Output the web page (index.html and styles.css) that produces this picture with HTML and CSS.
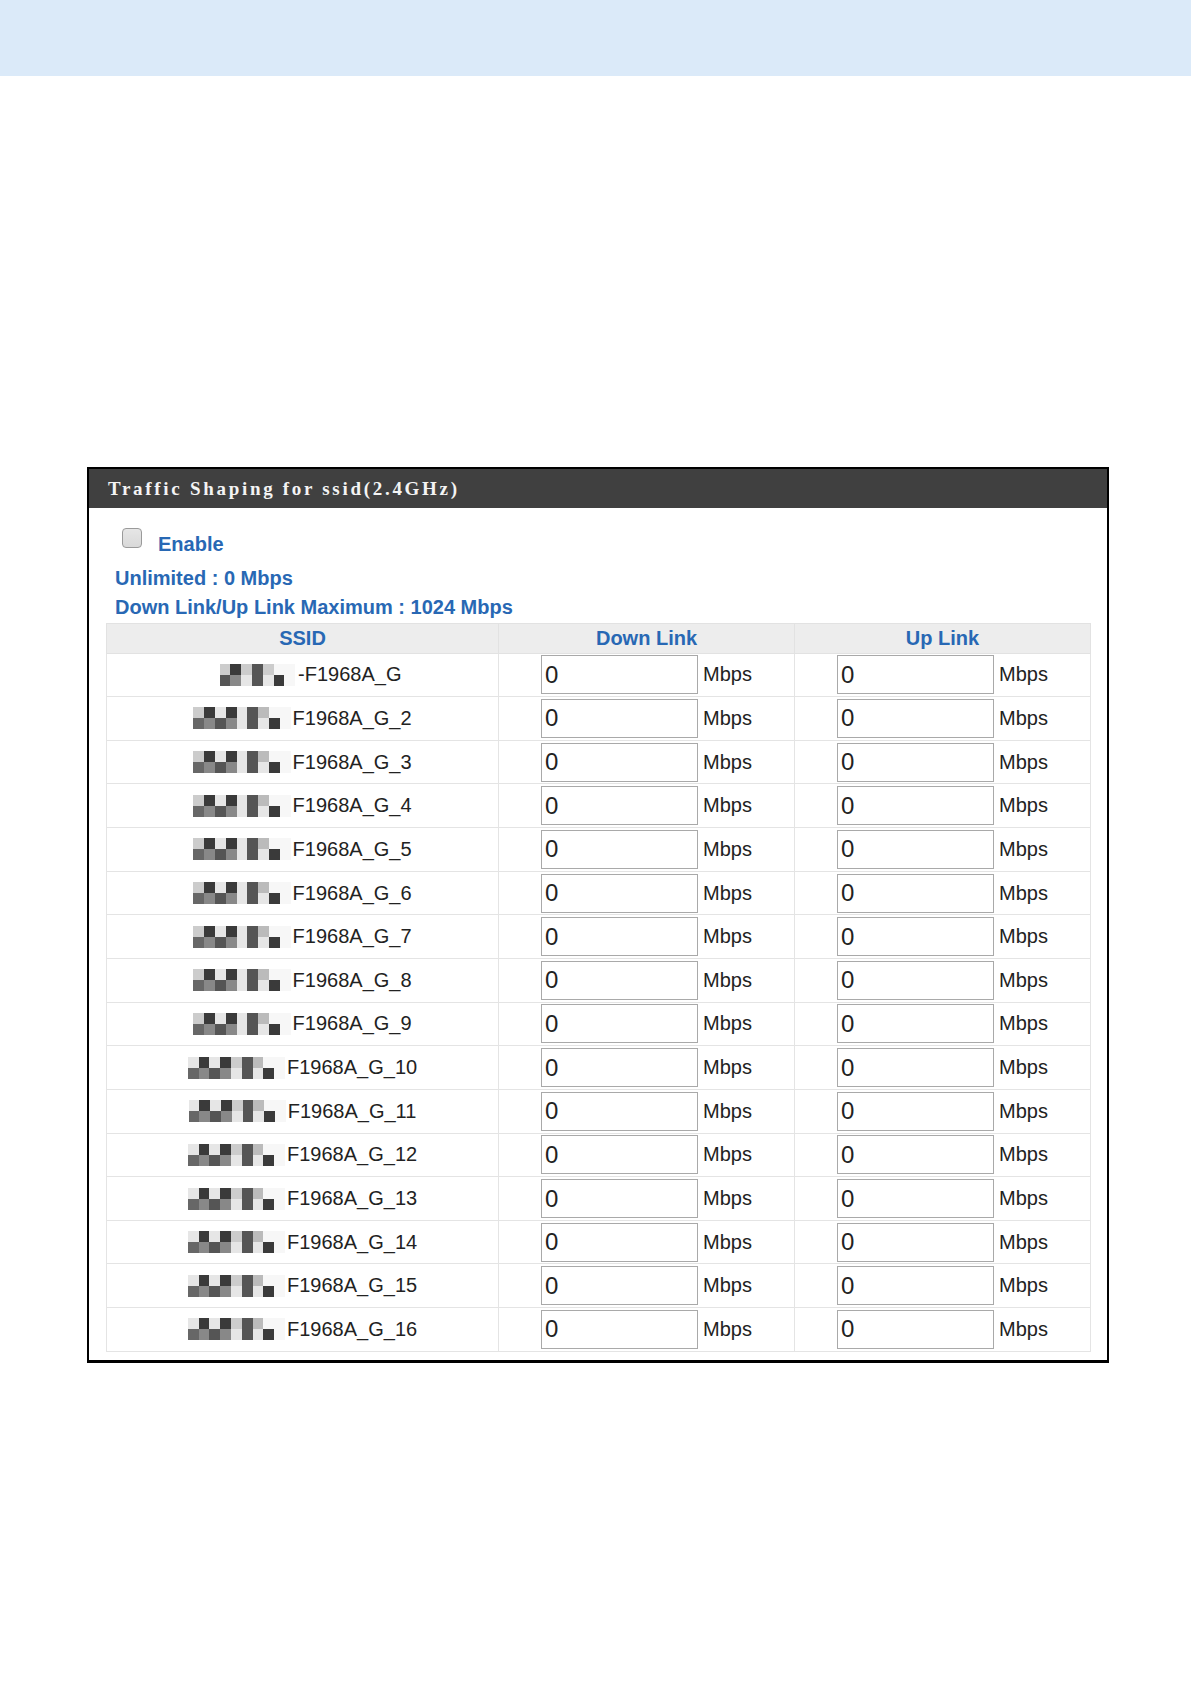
FILE: index.html
```html
<!DOCTYPE html>
<html lang="en">
<head>
<meta charset="utf-8">
<title>Traffic Shaping</title>
<link rel="stylesheet" href="styles.css">
</head>
<body>
<div class="banner"></div>
<section class="panel">
  <div class="panel-head">Traffic Shaping for ssid(2.4GHz)</div>
  <div class="panel-body">
    <div class="enable-row"><span class="check"></span><span class="enable">Enable</span></div>
    <div class="note first">Unlimited : 0 Mbps</div>
    <div class="note">Down Link/Up Link Maximum : 1024 Mbps</div>
    <table class="grid">
      <colgroup><col class="c-ssid"><col class="c-link"><col class="c-link"></colgroup>
      <thead>
        <tr><th>SSID</th><th>Down Link</th><th>Up Link</th></tr>
      </thead>
      <tbody>
        <tr>
          <td><div class="ssid"><span class="mosaic m7"><i class="l2"></i><i class="d3"></i><i class="l2"></i><i class="d2"></i><i class="l2"></i><i class="w"></i><i class="w"></i><i class="d2"></i><i class="m"></i><i class="l1"></i><i class="d2"></i><i class="l1"></i><i class="d3"></i><i class="w"></i></span><span class="name">-F1968A_G</span></div></td>
          <td><div class="rate"><input class="num" type="text" value="0"><span>Mbps</span></div></td>
          <td><div class="rate"><input class="num" type="text" value="0"><span>Mbps</span></div></td>
        </tr>
        <tr>
          <td><div class="ssid"><span class="mosaic m9"><i class="l2"></i><i class="d3"></i><i class="l1"></i><i class="d3"></i><i class="l1"></i><i class="d2"></i><i class="l3"></i><i class="w"></i><i class="w"></i><i class="d1"></i><i class="m"></i><i class="d2"></i><i class="m"></i><i class="l1"></i><i class="d2"></i><i class="l1"></i><i class="d3"></i><i class="w"></i></span><span class="name">F1968A_G_2</span></div></td>
          <td><div class="rate"><input class="num" type="text" value="0"><span>Mbps</span></div></td>
          <td><div class="rate"><input class="num" type="text" value="0"><span>Mbps</span></div></td>
        </tr>
        <tr>
          <td><div class="ssid"><span class="mosaic m9"><i class="l2"></i><i class="d3"></i><i class="l1"></i><i class="d3"></i><i class="l1"></i><i class="d2"></i><i class="l3"></i><i class="w"></i><i class="w"></i><i class="d1"></i><i class="m"></i><i class="d2"></i><i class="m"></i><i class="l1"></i><i class="d2"></i><i class="l1"></i><i class="d3"></i><i class="w"></i></span><span class="name">F1968A_G_3</span></div></td>
          <td><div class="rate"><input class="num" type="text" value="0"><span>Mbps</span></div></td>
          <td><div class="rate"><input class="num" type="text" value="0"><span>Mbps</span></div></td>
        </tr>
        <tr>
          <td><div class="ssid"><span class="mosaic m9"><i class="l2"></i><i class="d3"></i><i class="l1"></i><i class="d3"></i><i class="l1"></i><i class="d2"></i><i class="l3"></i><i class="w"></i><i class="w"></i><i class="d1"></i><i class="m"></i><i class="d2"></i><i class="m"></i><i class="l1"></i><i class="d2"></i><i class="l1"></i><i class="d3"></i><i class="w"></i></span><span class="name">F1968A_G_4</span></div></td>
          <td><div class="rate"><input class="num" type="text" value="0"><span>Mbps</span></div></td>
          <td><div class="rate"><input class="num" type="text" value="0"><span>Mbps</span></div></td>
        </tr>
        <tr>
          <td><div class="ssid"><span class="mosaic m9"><i class="l2"></i><i class="d3"></i><i class="l1"></i><i class="d3"></i><i class="l1"></i><i class="d2"></i><i class="l3"></i><i class="w"></i><i class="w"></i><i class="d1"></i><i class="m"></i><i class="d2"></i><i class="m"></i><i class="l1"></i><i class="d2"></i><i class="l1"></i><i class="d3"></i><i class="w"></i></span><span class="name">F1968A_G_5</span></div></td>
          <td><div class="rate"><input class="num" type="text" value="0"><span>Mbps</span></div></td>
          <td><div class="rate"><input class="num" type="text" value="0"><span>Mbps</span></div></td>
        </tr>
        <tr>
          <td><div class="ssid"><span class="mosaic m9"><i class="l2"></i><i class="d3"></i><i class="l1"></i><i class="d3"></i><i class="l1"></i><i class="d2"></i><i class="l3"></i><i class="w"></i><i class="w"></i><i class="d1"></i><i class="m"></i><i class="d2"></i><i class="m"></i><i class="l1"></i><i class="d2"></i><i class="l1"></i><i class="d3"></i><i class="w"></i></span><span class="name">F1968A_G_6</span></div></td>
          <td><div class="rate"><input class="num" type="text" value="0"><span>Mbps</span></div></td>
          <td><div class="rate"><input class="num" type="text" value="0"><span>Mbps</span></div></td>
        </tr>
        <tr>
          <td><div class="ssid"><span class="mosaic m9"><i class="l2"></i><i class="d3"></i><i class="l1"></i><i class="d3"></i><i class="l1"></i><i class="d2"></i><i class="l3"></i><i class="w"></i><i class="w"></i><i class="d1"></i><i class="m"></i><i class="d2"></i><i class="m"></i><i class="l1"></i><i class="d2"></i><i class="l1"></i><i class="d3"></i><i class="w"></i></span><span class="name">F1968A_G_7</span></div></td>
          <td><div class="rate"><input class="num" type="text" value="0"><span>Mbps</span></div></td>
          <td><div class="rate"><input class="num" type="text" value="0"><span>Mbps</span></div></td>
        </tr>
        <tr>
          <td><div class="ssid"><span class="mosaic m9"><i class="l2"></i><i class="d3"></i><i class="l1"></i><i class="d3"></i><i class="l1"></i><i class="d2"></i><i class="l3"></i><i class="w"></i><i class="w"></i><i class="d1"></i><i class="m"></i><i class="d2"></i><i class="m"></i><i class="l1"></i><i class="d2"></i><i class="l1"></i><i class="d3"></i><i class="w"></i></span><span class="name">F1968A_G_8</span></div></td>
          <td><div class="rate"><input class="num" type="text" value="0"><span>Mbps</span></div></td>
          <td><div class="rate"><input class="num" type="text" value="0"><span>Mbps</span></div></td>
        </tr>
        <tr>
          <td><div class="ssid"><span class="mosaic m9"><i class="l2"></i><i class="d3"></i><i class="l1"></i><i class="d3"></i><i class="l1"></i><i class="d2"></i><i class="l3"></i><i class="w"></i><i class="w"></i><i class="d1"></i><i class="m"></i><i class="d2"></i><i class="m"></i><i class="l1"></i><i class="d2"></i><i class="l1"></i><i class="d3"></i><i class="w"></i></span><span class="name">F1968A_G_9</span></div></td>
          <td><div class="rate"><input class="num" type="text" value="0"><span>Mbps</span></div></td>
          <td><div class="rate"><input class="num" type="text" value="0"><span>Mbps</span></div></td>
        </tr>
        <tr>
          <td><div class="ssid"><span class="mosaic m9"><i class="l1"></i><i class="d3"></i><i class="l1"></i><i class="d3"></i><i class="l2"></i><i class="d2"></i><i class="l3"></i><i class="w"></i><i class="w"></i><i class="d1"></i><i class="m"></i><i class="d2"></i><i class="m"></i><i class="l1"></i><i class="d2"></i><i class="l1"></i><i class="d3"></i><i class="w"></i></span><span class="name">F1968A_G_10</span></div></td>
          <td><div class="rate"><input class="num" type="text" value="0"><span>Mbps</span></div></td>
          <td><div class="rate"><input class="num" type="text" value="0"><span>Mbps</span></div></td>
        </tr>
        <tr>
          <td><div class="ssid"><span class="mosaic m9"><i class="l1"></i><i class="d3"></i><i class="l1"></i><i class="d3"></i><i class="l2"></i><i class="d2"></i><i class="l3"></i><i class="w"></i><i class="w"></i><i class="d1"></i><i class="m"></i><i class="d2"></i><i class="m"></i><i class="l1"></i><i class="d2"></i><i class="l1"></i><i class="d3"></i><i class="w"></i></span><span class="name">F1968A_G_11</span></div></td>
          <td><div class="rate"><input class="num" type="text" value="0"><span>Mbps</span></div></td>
          <td><div class="rate"><input class="num" type="text" value="0"><span>Mbps</span></div></td>
        </tr>
        <tr>
          <td><div class="ssid"><span class="mosaic m9"><i class="l1"></i><i class="d3"></i><i class="l1"></i><i class="d3"></i><i class="l2"></i><i class="d2"></i><i class="l3"></i><i class="w"></i><i class="w"></i><i class="d1"></i><i class="m"></i><i class="d2"></i><i class="m"></i><i class="l1"></i><i class="d2"></i><i class="l1"></i><i class="d3"></i><i class="w"></i></span><span class="name">F1968A_G_12</span></div></td>
          <td><div class="rate"><input class="num" type="text" value="0"><span>Mbps</span></div></td>
          <td><div class="rate"><input class="num" type="text" value="0"><span>Mbps</span></div></td>
        </tr>
        <tr>
          <td><div class="ssid"><span class="mosaic m9"><i class="l1"></i><i class="d3"></i><i class="l1"></i><i class="d3"></i><i class="l2"></i><i class="d2"></i><i class="l3"></i><i class="w"></i><i class="w"></i><i class="d1"></i><i class="m"></i><i class="d2"></i><i class="m"></i><i class="l1"></i><i class="d2"></i><i class="l1"></i><i class="d3"></i><i class="w"></i></span><span class="name">F1968A_G_13</span></div></td>
          <td><div class="rate"><input class="num" type="text" value="0"><span>Mbps</span></div></td>
          <td><div class="rate"><input class="num" type="text" value="0"><span>Mbps</span></div></td>
        </tr>
        <tr>
          <td><div class="ssid"><span class="mosaic m9"><i class="l1"></i><i class="d3"></i><i class="l1"></i><i class="d3"></i><i class="l2"></i><i class="d2"></i><i class="l3"></i><i class="w"></i><i class="w"></i><i class="d1"></i><i class="m"></i><i class="d2"></i><i class="m"></i><i class="l1"></i><i class="d2"></i><i class="l1"></i><i class="d3"></i><i class="w"></i></span><span class="name">F1968A_G_14</span></div></td>
          <td><div class="rate"><input class="num" type="text" value="0"><span>Mbps</span></div></td>
          <td><div class="rate"><input class="num" type="text" value="0"><span>Mbps</span></div></td>
        </tr>
        <tr>
          <td><div class="ssid"><span class="mosaic m9"><i class="l1"></i><i class="d3"></i><i class="l1"></i><i class="d3"></i><i class="l2"></i><i class="d2"></i><i class="l3"></i><i class="w"></i><i class="w"></i><i class="d1"></i><i class="m"></i><i class="d2"></i><i class="m"></i><i class="l1"></i><i class="d2"></i><i class="l1"></i><i class="d3"></i><i class="w"></i></span><span class="name">F1968A_G_15</span></div></td>
          <td><div class="rate"><input class="num" type="text" value="0"><span>Mbps</span></div></td>
          <td><div class="rate"><input class="num" type="text" value="0"><span>Mbps</span></div></td>
        </tr>
        <tr>
          <td><div class="ssid"><span class="mosaic m9"><i class="l1"></i><i class="d3"></i><i class="l1"></i><i class="d3"></i><i class="l2"></i><i class="d2"></i><i class="l3"></i><i class="w"></i><i class="w"></i><i class="d1"></i><i class="m"></i><i class="d2"></i><i class="m"></i><i class="l1"></i><i class="d2"></i><i class="l1"></i><i class="d3"></i><i class="w"></i></span><span class="name">F1968A_G_16</span></div></td>
          <td><div class="rate"><input class="num" type="text" value="0"><span>Mbps</span></div></td>
          <td><div class="rate"><input class="num" type="text" value="0"><span>Mbps</span></div></td>
        </tr>
      </tbody>
    </table>
  </div>
</section>
</body>
</html>
```

FILE: styles.css
```css
html, body {
  margin: 0;
  padding: 0;
  background: #ffffff;
}

body {
  font-family: "Liberation Sans", Arial, sans-serif;
  color: #222222;
}

.banner {
  height: 76px;
  background: #dbeaf9;
}

.panel {
  margin: 391px 0 0 87px;
  width: 1022px;
  box-sizing: border-box;
  border: 2px solid #000000;
  border-bottom-width: 3px;
}

.panel-head {
  height: 39px;
  line-height: 39px;
  background: #404040;
  color: #f4f4f4;
  font-family: "Liberation Serif", "Times New Roman", serif;
  font-weight: bold;
  font-size: 19px;
  letter-spacing: 2.7px;
  padding-left: 19px;
  white-space: nowrap;
}

.panel-body {
  padding: 20px 17px 8px 17px;
}

.enable-row {
  display: flex;
  align-items: flex-start;
  padding-left: 16px;
}

.check {
  width: 20px;
  height: 20px;
  box-sizing: border-box;
  border: 1px solid #9a9a9a;
  border-radius: 4px;
  background: linear-gradient(#e6e6e6, #d9d9d9);
  flex: none;
}

.enable {
  margin: 2px 0 0 16px;
  line-height: 29px;
  font-size: 20px;
  font-weight: bold;
  color: #2868b4;
}

.note {
  padding-left: 9px;
  line-height: 29px;
  font-size: 20px;
  font-weight: bold;
  color: #2868b4;
}

.note.first {
  margin-top: 5px;
}

.grid {
  margin-top: 1px;
  width: 984px;
  table-layout: fixed;
  border-collapse: collapse;
}

.c-ssid { width: 392px; }
.c-link { width: 296px; }

.grid th {
  height: 28.5px;
  padding: 0;
  background: #ededed;
  border: 1px solid #e2e2e2;
  color: #2868b4;
  font-size: 20px;
  font-weight: bold;
  line-height: 23px;
  text-align: center;
  vertical-align: middle;
}

.grid td {
  height: 42.65px;
  padding: 0;
  border: 1px solid #e4e4e4;
  vertical-align: middle;
  font-size: 20px;
  line-height: 23px;
  color: #222222;
}

.ssid {
  display: flex;
  justify-content: center;
  align-items: center;
  gap: 2px;
}

.mosaic {
  display: grid;
  grid-auto-rows: 11px;
  flex: none;
}

.mosaic.m9 { grid-template-columns: repeat(9, 10.8px); }
.mosaic.m7 { grid-template-columns: repeat(7, 10.8px); margin: 0 1px 0 16px; }

.mosaic i { display: block; }
.mosaic .w  { background: #f7f7f7; }
.mosaic .l1 { background: #e6e6e6; }
.mosaic .l2 { background: #cccccc; }
.mosaic .l3 { background: #bbbbbb; }
.mosaic .m  { background: #888888; }
.mosaic .d1 { background: #676767; }
.mosaic .d2 { background: #555555; }
.mosaic .d3 { background: #3a3a3a; }

.rate {
  display: flex;
  justify-content: center;
  align-items: center;
  gap: 5px;
}

.num {
  display: block;
  width: 157px;
  height: 39px;
  box-sizing: border-box;
  margin: 0;
  padding: 0 3px;
  border: 1px solid #a9a9a9;
  background: #ffffff;
  font-family: "Liberation Sans", Arial, sans-serif;
  font-size: 24px;
  color: #222222;
  outline: none;
}
```
